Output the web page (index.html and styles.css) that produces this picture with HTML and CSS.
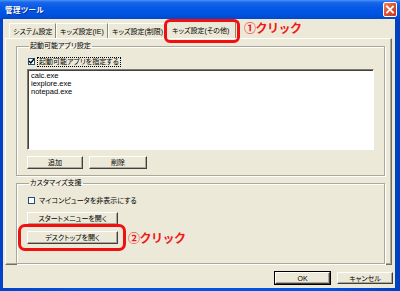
FILE: index.html
```html
<!DOCTYPE html>
<html>

<head>
  <title>管理ツール</title>
  <link rel="stylesheet" href="styles.css">
</head>

<body>
  <div class="window">
    <div class="titlebar">
      <span class="title">管理ツール</span>
      <span class="close">
        <svg width="14" height="15" viewBox="0 0 14 15">
          <path d="M4 4.5 L10 10.5 M10 4.5 L4 10.5" stroke="#fff" stroke-width="1.8" stroke-linecap="square" />
        </svg>
      </span>
    </div>

    <div class="client">
      <div class="tabs">
        <div class="tab tab-1">システム設定</div>
        <div class="tab tab-2">キッズ設定(IE)</div>
        <div class="tab tab-3">キッズ設定(制限)</div>
        <div class="tab active">キッズ設定(その他)<span class="ring"></span></div>
        <span class="note">①クリック</span>
      </div>

      <div class="panel">
        <fieldset class="group group-apps">
          <legend>起動可能アプリ設定</legend>
          <div class="check-row">
            <span class="checkbox checked">
              <svg width="7" height="7" viewBox="0 0 7 7">
                <path d="M1 3 L2.8 5 L6 1" stroke="#000" stroke-width="1.3" fill="none" />
              </svg>
            </span>
            <span class="label focused">起動可能アプリを指定する</span>
          </div>
          <ul class="listbox">
            <li>calc.exe</li>
            <li>iexplore.exe</li>
            <li>notepad.exe</li>
          </ul>
          <div class="button-row">
            <button class="btn btn-add">追加</button>
            <button class="btn btn-del">削除</button>
          </div>
        </fieldset>

        <fieldset class="group group-custom">
          <legend>カスタマイズ支援</legend>
          <div class="check-row">
            <span class="checkbox"></span>
            <span class="label">マイコンピュータを非表示にする</span>
          </div>
          <button class="btn btn-wide">スタートメニューを開く</button>
          <div class="marked-row">
            <div class="marked">
              <button class="btn btn-wide">デスクトップを開く</button>
              <span class="ring ring-btn"></span>
            </div>
            <span class="note">②クリック</span>
          </div>
        </fieldset>
      </div>

      <div class="footer">
        <button class="btn btn-default">OK</button>
        <button class="btn btn-foot">キャンセル</button>
      </div>
    </div>
  </div>
</body>

</html>
```

FILE: styles.css
```css
body {
  margin: 0;
  width: 400px;
  height: 291px;
  overflow: hidden;
  font-family: 'Liberation Sans', 'Noto Sans CJK JP', sans-serif;
  font-size: 7px;
  font-feature-settings: "palt";
  color: #000;
}

.window {
  width: 400px;
  height: 291px;
  display: flex;
  flex-direction: column;
  background: linear-gradient(90deg, #0042c8, #0054e3 20%, #0054e3 80%, #0040c0);
}

/* Title bar */
.titlebar {
  height: 19px;
  display: flex;
  align-items: center;
  padding: 0 3px 0 5px;
  background: linear-gradient(#4a94f8 0%, #1a67ea 12%, #0758e6 40%, #0054e3 70%, #0049cf 100%);
}

.title {
  flex: 1;
  color: #fff;
  font-weight: bold;
  font-size: 7.5px;
  letter-spacing: 0.5px;
  text-shadow: 1px 1px 0 #0a2f8a;
}

.close {
  width: 14px;
  height: 15px;
  box-sizing: border-box;
  border: 1px solid #fff;
  border-radius: 2px;
  background: linear-gradient(135deg, #f08a6e, #e0512f 45%, #c5381a);
  display: flex;
}

.close svg {
  margin: -1px;
}

/* Client area */
.client {
  flex: 1;
  margin: 0 5px 3px 3px;
  background-color: #ece9d8;
  display: flex;
  flex-direction: column;
}

.tabs {
  height: 18px;
  display: flex;
  align-items: flex-end;
  padding: 1px 0 0 6px;
}

.tab {
  height: 15px;
  box-sizing: border-box;
  padding: 3px 0 0 3px;
  border-left: 1px solid #fff;
  border-top: 1px solid #fff;
  border-right: 1px solid #8a877a;
  white-space: nowrap;
  overflow: hidden;
  line-height: 9px;
}

.tab-1 {
  width: 47px;
}

.tab-2 {
  width: 52px;
}

.tab-3 {
  width: 59px;
  border-right: none;
}

.tab.active {
  position: relative;
  overflow: visible;
  width: 70px;
  height: 17px;
  margin-left: -1px;
  padding: 4px 0 0 5px;
  background-color: #ece9d8;
  border-radius: 2px 2px 0 0;
}

.ring {
  position: absolute;
  left: -3px;
  top: -3px;
  right: -5px;
  bottom: -5px;
  border: 3px solid #f01010;
  border-radius: 6px;
}

.note {
  color: #f01818;
  font-family: 'Noto Sans CJK JP', sans-serif;
  font-feature-settings: normal;
  font-size: 12px;
  font-weight: bold;
  line-height: 12px;
  letter-spacing: -0.5px;
}

.tabs .note {
  align-self: flex-start;
  margin: 2px 0 0 8px;
}

/* Tab panel */
.panel {
  height: 227px;
  box-sizing: border-box;
  margin: 0 3px 0 2px;
  padding: 3px 6px 0 10px;
  border-left: 1px solid #fff;
  border-top: 1px solid #fff;
  border-right: 1px solid #716f64;
  border-bottom: 1px solid #716f64;
  box-shadow: inset -1px -1px 0 #aca899;
  display: flex;
  flex-direction: column;
}

.group {
  margin: 0;
  min-width: 0;
  border: 1px solid #aca899;
  box-shadow: 1px 1px 0 #fff, inset 1px 1px 0 #fff;
  padding: 0 10px 0 10px;
}

.group legend {
  padding: 0 1px;
  margin-left: 2px;
  line-height: 8px;
}

.group-apps {
  height: 132px;
  padding-top: 7px;
}

.group-custom {
  margin-top: 3px;
  height: 78px;
  padding-top: 9px;
}

.check-row {
  height: 9px;
  display: flex;
  align-items: center;
  gap: 3px;
  padding-left: 1px;
}

.checkbox {
  width: 7px;
  height: 7px;
  box-sizing: border-box;
  border: 1px solid #1c5180;
  background-color: #fff;
  display: flex;
}

.checkbox svg {
  margin: -1px;
}

.label {
  line-height: 8px;
  padding: 0 1px;
}

.label.focused {
  outline: 1px dotted #000;
}

.listbox {
  list-style-type: none;
  margin: 3px 0 0 0;
  padding: 2px 2px;
  height: 81px;
  box-sizing: border-box;
  background-color: #fff;
  border-top: 1px solid #7f7c6f;
  border-left: 1px solid #7f7c6f;
  border-right: 1px solid #fff;
  border-bottom: 1px solid #fff;
  box-shadow: inset 1px 1px 0 #404040;
}

.listbox li {
  line-height: 8px;
  padding-left: 1px;
  font-size: 7.5px;
}

/* Buttons */
.btn {
  height: 13px;
  box-sizing: border-box;
  padding: 0;
  font-family: 'Liberation Sans', 'Noto Sans CJK JP', sans-serif;
  font-feature-settings: "palt";
  font-size: 7px;
  line-height: 9px;
  color: #000;
  background-color: #ece9d8;
  border-top: 1px solid #fff;
  border-left: 1px solid #fff;
  border-right: 1px solid #404040;
  border-bottom: 1px solid #404040;
  box-shadow: inset -1px -1px 0 #aca899;
}

.button-row {
  display: flex;
  gap: 6px;
  margin-top: 6px;
}

.btn-add {
  width: 56px;
}

.btn-del {
  width: 58px;
}

.btn-wide {
  display: block;
  width: 91px;
}

.group-custom .check-row + .btn {
  margin-top: 7px;
}

.marked-row {
  display: flex;
  align-items: center;
  gap: 10px;
  margin-top: 6px;
}

.marked {
  position: relative;
}

.ring-btn {
  left: -9px;
  top: -7px;
  right: -8px;
  bottom: -7px;
  border-radius: 7px;
}

/* Footer */
.footer {
  display: flex;
  justify-content: flex-end;
  gap: 7px;
  padding: 7px 2px 0 0;
}

.btn-default {
  width: 55px;
  height: 12px;
  outline: 1px solid #000;
}

.btn-foot {
  width: 56px;
  height: 12px;
}
```
